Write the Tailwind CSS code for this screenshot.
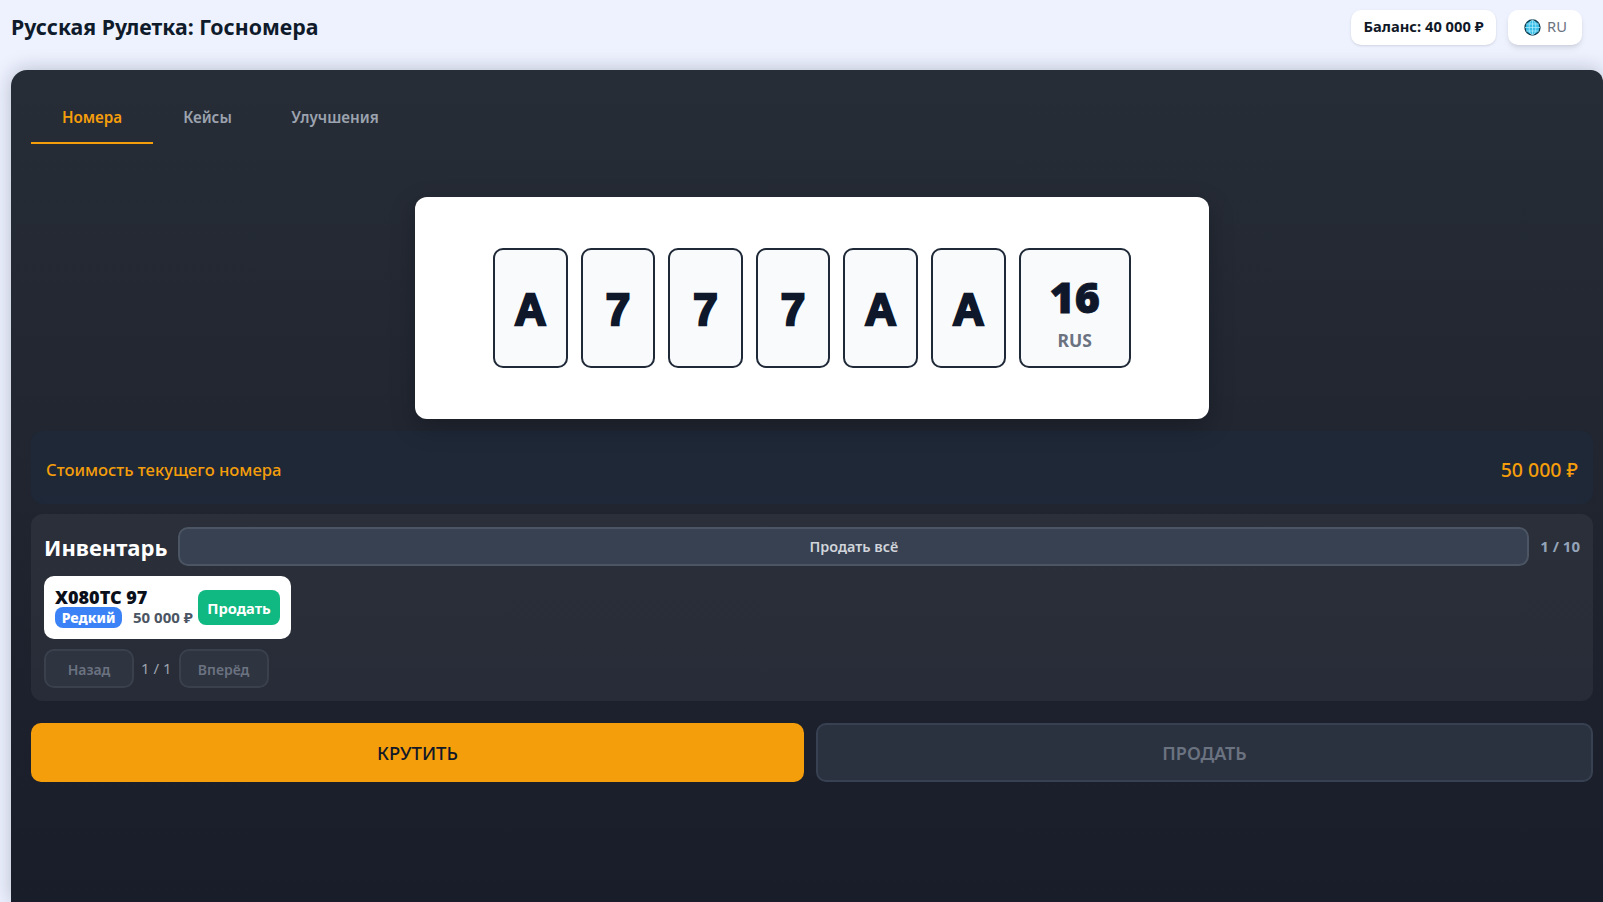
<!DOCTYPE html>
<html lang="ru">
<head>
<meta charset="utf-8">
<title>Русская Рулетка: Госномера</title>
<script src="https://cdn.jsdelivr.net/npm/@tailwindcss/browser@4"></script>
</head>
<body class="h-[902px] overflow-hidden bg-[#eef2ff] font-['Noto_Sans',sans-serif] text-[#111827]">
<header class="flex h-[70px] items-center justify-between pl-[11px] pr-[21px]">
  <h1 class="relative top-[-8px] text-[21.3px] font-bold leading-none text-[#0f1b2a]">Русская Рулетка: Госномера</h1>
  <div class="relative top-[-8px] flex items-center gap-3">
    <div class="flex h-[35px] w-[145px] items-center justify-center rounded-[10px] bg-white pb-[2px] text-[14.7px] font-bold text-[#111827] shadow-sm">Баланс: 40 000 ₽</div>
    <div class="flex h-[35px] w-[74px] items-center justify-center gap-[6px] rounded-[10px] bg-white pl-[1px] text-[14.7px] text-[#6b7280] shadow-md">
      <svg width="17" height="17" viewBox="0 0 17 17" fill="none"><circle cx="8.5" cy="8.5" r="7.5" fill="#36bde8" stroke="#0f3d4f" stroke-width="1.3"/><ellipse cx="8.5" cy="8.5" rx="3.4" ry="7.5" stroke="#b5ecfa" stroke-width=".7"/><path d="M1 8.5h15M2 5h13M2 12h13M8.5 1v15" stroke="#b5ecfa" stroke-width=".7"/></svg>
      <span class="pb-[2px]">RU</span>
    </div>
  </div>
</header>
<main class="ml-[11px] h-[832px] rounded-tl-[16px] rounded-tr-[12px] bg-gradient-to-b from-[#272d37] to-[#191d29] pl-5 pr-[10px] pt-[20px] shadow-[0_0_20px_rgba(15,23,42,0.25)]">
  <nav class="flex h-[54px] text-[15.2px] font-semibold">
    <div class="flex w-[122px] items-center justify-center border-b-2 border-[#f59e0b] pt-[2px] text-[#f59e0b]">Номера</div>
    <div class="flex w-[109px] items-center justify-center text-[#9ca3af]">Кейсы</div>
    <div class="flex w-[146px] items-center justify-center text-[#9ca3af]">Улучшения</div>
  </nav>
  <section class="mt-[53px] flex justify-center">
    <div class="flex h-[222px] w-[794px] items-center justify-center gap-[13px] rounded-[12px] bg-white shadow-[0_8px_24px_rgba(0,0,0,0.25)]">
      <div class="flex h-[120px] w-[74.6px] items-center justify-center rounded-[10px] border-2 border-[#1f2937] bg-[#f8fafc] pt-[4px] font-['Liberation_Sans',sans-serif] text-[44px] font-bold text-[#0f172a] [-webkit-text-stroke:2.4px_#0f172a]">A</div>
      <div class="flex h-[120px] w-[74.6px] items-center justify-center rounded-[10px] border-2 border-[#1f2937] bg-[#f8fafc] pt-[4px] font-['Liberation_Sans',sans-serif] text-[44px] font-bold text-[#0f172a] [-webkit-text-stroke:2.4px_#0f172a]">7</div>
      <div class="flex h-[120px] w-[74.6px] items-center justify-center rounded-[10px] border-2 border-[#1f2937] bg-[#f8fafc] pt-[4px] font-['Liberation_Sans',sans-serif] text-[44px] font-bold text-[#0f172a] [-webkit-text-stroke:2.4px_#0f172a]">7</div>
      <div class="flex h-[120px] w-[74.6px] items-center justify-center rounded-[10px] border-2 border-[#1f2937] bg-[#f8fafc] pt-[4px] font-['Liberation_Sans',sans-serif] text-[44px] font-bold text-[#0f172a] [-webkit-text-stroke:2.4px_#0f172a]">7</div>
      <div class="flex h-[120px] w-[74.6px] items-center justify-center rounded-[10px] border-2 border-[#1f2937] bg-[#f8fafc] pt-[4px] font-['Liberation_Sans',sans-serif] text-[44px] font-bold text-[#0f172a] [-webkit-text-stroke:2.4px_#0f172a]">A</div>
      <div class="flex h-[120px] w-[74.6px] items-center justify-center rounded-[10px] border-2 border-[#1f2937] bg-[#f8fafc] pt-[4px] font-['Liberation_Sans',sans-serif] text-[44px] font-bold text-[#0f172a] [-webkit-text-stroke:2.4px_#0f172a]">A</div>
      <div class="flex h-[120px] w-[112.4px] flex-col items-center justify-center rounded-[10px] border-2 border-[#1f2937] bg-[#f8fafc]">
        <span class="mt-[7px] text-[43px] font-black leading-[50px] text-[#0f172a] [-webkit-text-stroke:0.8px_#0f172a]">16</span>
        <span class="mt-[6px] text-[17.5px] font-bold leading-[24px] text-[#6b7280]">RUS</span>
      </div>
    </div>
  </section>
  <section class="mt-3 flex h-[73px] items-center justify-between rounded-[12px] bg-[#1e293b]/70 px-[15px] text-[#f59e0b]">
    <span class="pt-[5px] text-[16.6px] font-medium">Стоимость текущего номера</span>
    <span class="pt-[4px] text-[19.5px] font-medium">50 000 ₽</span>
  </section>
  <section class="mt-[10px] h-[187px] rounded-[12px] bg-white/5 px-[13px] pt-[13px]">
    <div class="flex h-[39px] items-center gap-[11px]">
      <h2 class="pt-[2px] text-[22px] font-bold text-white">Инвентарь</h2>
      <button class="h-[39px] flex-1 rounded-[10px] border-2 border-[#4b5563] bg-[#374151] text-[14.4px] font-semibold text-[#d1d5db]">Продать всё</button>
      <span class="text-[15px] font-bold text-[#94a3b8]">1 / 10</span>
    </div>
    <div class="mt-[10px] flex h-[63px] w-[247px] items-center justify-between rounded-[10px] bg-white px-[11px]">
      <div>
        <div class="pt-[1px] text-[18px] font-black leading-[18px] text-[#0a0f1a]">X080TC 97</div>
        <div class="flex items-center gap-[11px]">
          <span class="flex h-[21px] w-[67px] items-center justify-center rounded-[8px] bg-[#3b82f6] text-[14px] font-extrabold text-white">Редкий</span>
          <span class="text-[15px] font-bold text-[#4b5563]">50 000 ₽</span>
        </div>
      </div>
      <button class="h-[35px] w-[82px] rounded-[8px] bg-[#10b981] pt-[1px] text-[14.7px] font-bold text-white">Продать</button>
    </div>
    <div class="mt-[10px] flex items-center gap-[7px] text-[14px]">
      <button class="h-[39px] w-[90px] rounded-[10px] border-2 border-[#3a414d] bg-[#2e3440] pt-[1px] font-semibold text-[#6b7280]">Назад</button>
      <span class="text-[15px] text-[#9ca3af]">1 / 1</span>
      <button class="h-[39px] w-[90px] rounded-[10px] border-2 border-[#3a414d] bg-[#2e3440] pt-[1px] font-semibold text-[#6b7280]">Вперёд</button>
    </div>
  </section>
  <section class="mt-[22px] flex h-[59px] gap-3">
    <button class="w-[773px] rounded-[10px] bg-[#f59e0b] text-[18.5px] font-medium text-[#111827]">КРУТИТЬ</button>
    <button class="flex-1 rounded-[10px] border-2 border-[#374151] bg-[#2a3240] pt-[1px] text-[18px] font-semibold text-[#6b7280]">ПРОДАТЬ</button>
  </section>
</main>
</body>
</html>
